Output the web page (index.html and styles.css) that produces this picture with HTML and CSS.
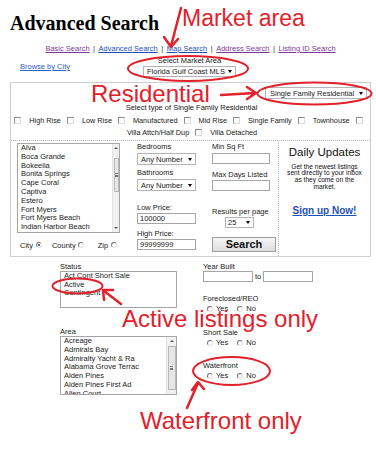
FILE: index.html
```html
<!DOCTYPE html>
<html>
<head>
<meta charset="utf-8">
<title>Advanced Search</title>
<link rel="stylesheet" href="styles.css">
</head>
<body>
<div class="page">
  <h1 class="title">Advanced Search</h1>
  <div class="nav">
    <a class="visited">Basic Search</a><span class="sep">|</span><a>Advanced Search</a><span class="sep">|</span><a>Map Search</a><span class="sep">|</span><a class="visited">Address Search</a><span class="sep">|</span><a class="visited">Listing ID Search</a>
  </div>
  <div class="market-row">
    <a class="browse">Browse by City</a>
    <div class="market">
      <div class="market-label">Select Market Area</div>
      <div class="select market-select"><span>Florida Gulf Coast MLS</span><i class="caret"></i></div>
    </div>
  </div>

  <div class="search-box">
    <div class="type-section">
      <div class="type-top">
        <div class="select type-select"><span>Single Family Residential</span><i class="caret"></i></div>
      </div>
      <div class="type-caption">Select type of Single Family Residential</div>
      <div class="check-row">
        <i class="cb"></i><span class="cl">High Rise</span>
        <i class="cb"></i><span class="cl">Low Rise</span>
        <i class="cb"></i><span class="cl">Manufactured</span>
        <i class="cb"></i><span class="cl">Mid Rise</span>
        <i class="cb"></i><span class="cl">Single Family</span>
        <i class="cb"></i><span class="cl">Townhouse</span>
        <i class="cb"></i>
      </div>
      <div class="check-row row2">
        <span class="cl">Villa Attch/Half Dup</span>
        <i class="cb"></i><span class="cl last">Villa Detached</span>
      </div>
    </div>

    <div class="main">
      <div class="col-city">
        <div class="listbox city-list">
          <div class="options">
            <div>Alva</div>
            <div>Boca Grande</div>
            <div>Bokeelia</div>
            <div>Bonita Springs</div>
            <div>Cape Coral</div>
            <div>Captiva</div>
            <div>Estero</div>
            <div>Fort Myers</div>
            <div>Fort Myers Beach</div>
            <div>Indian Harbor Beach</div>
          </div>
          <div class="scrollbar">
            <div class="sb-btn"><i class="up"></i></div>
            <div class="sb-track"><div class="sb-thumb city-thumb"><i class="grip"></i></div></div>
            <div class="sb-btn"><i class="down"></i></div>
          </div>
        </div>
        <div class="loc-row">
          <span>City</span><i class="radio on r1"></i>
          <span class="g-county">County</span><i class="radio r2"></i>
          <span class="g-zip">Zip</span><i class="radio r1"></i>
        </div>
      </div>

      <div class="col-rooms">
        <div class="lbl">Bedrooms</div>
        <div class="select room-select"><span>Any Number</span><i class="caret"></i></div>
        <div class="lbl l-bath">Bathrooms</div>
        <div class="select room-select s-bath"><span>Any Number</span><i class="caret"></i></div>
        <div class="lbl l-low">Low Price:</div>
        <div class="input price">100000</div>
        <div class="lbl l-high">High Price:</div>
        <div class="input price i-high">99999999</div>
      </div>

      <div class="col-size">
        <div class="lbl">Min Sq Ft</div>
        <div class="input size-input"></div>
        <div class="lbl l-days">Max Days Listed</div>
        <div class="input size-input i-days"></div>
        <div class="lbl l-results">Results per page</div>
        <div class="select results-select"><span>25</span><i class="caret"></i></div>
        <div class="search-btn">Search</div>
      </div>

      <div class="col-daily">
        <div class="daily-title">Daily Updates</div>
        <div class="daily-text">Get the newest listings<br>sent directly to your inbox<br>as they come on the<br>market.</div>
        <a class="signup">Sign up Now!</a>
      </div>
    </div>
  </div>

  <div class="lower">
    <div class="col-a">
      <div class="lbl">Status</div>
      <div class="listbox status-list">
        <div class="options">
          <div>Act Cont Short Sale</div>
          <div>Active</div>
          <div>Contingent</div>
        </div>
      </div>
      <div class="lbl l-area">Area</div>
      <div class="listbox area-list">
        <div class="options">
          <div>Acreage</div>
          <div>Admirals Bay</div>
          <div>Admiralty Yacht &amp; Ra</div>
          <div>Alabama Grove Terrac</div>
          <div>Alden Pines</div>
          <div>Alden Pines First Ad</div>
          <div>Allen Court</div>
        </div>
        <div class="scrollbar wide">
          <div class="sb-btn"><i class="up"></i></div>
          <div class="sb-track"><div class="sb-thumb area-thumb"><i class="grip"></i></div></div>
        </div>
      </div>
    </div>
    <div class="col-b">
      <div class="lbl">Year Built</div>
      <div class="year-row"><div class="input year"></div><span class="to">to</span><div class="input year"></div></div>
      <div class="lbl l-fore">Foreclosed/REO</div>
      <div class="yn"><i class="radio"></i><span class="yes">Yes</span><i class="radio r-no"></i><span class="no">No</span></div>
      <div class="lbl l-short">Short Sale</div>
      <div class="yn"><i class="radio"></i><span class="yes">Yes</span><i class="radio r-no"></i><span class="no">No</span></div>
      <div class="lbl l-water">Waterfront</div>
      <div class="yn"><i class="radio"></i><span class="yes">Yes</span><i class="radio r-no"></i><span class="no">No</span></div>
    </div>
  </div>

  <div class="notes">
    <svg class="marks" width="376" height="452" viewBox="0 0 376 452">
      <g fill="none" stroke="#e3212b" stroke-width="2" stroke-linecap="round" stroke-linejoin="round">
        <ellipse cx="188" cy="68.5" rx="60" ry="12.5"/>
        <ellipse cx="314.5" cy="93.5" rx="57" ry="11"/>
        <ellipse cx="77.5" cy="286" rx="25" ry="7.5"/>
        <ellipse cx="231.5" cy="371" rx="38.5" ry="14"/>
        <path stroke-width="2.5" d="M181 8 L171 46 M164 37 L171 47 L178 39"/>
        <path stroke-width="2.5" d="M221 95 L255 93 M247 87 L256 93 L247 99"/>
        <path stroke-width="2.5" d="M121 304 L104 291 M104 300 L103 290 L113 290"/>
        <path stroke-width="2.5" d="M187 408 L198 383 M192 390 L198 382 L204 389"/>
      </g>
    </svg>
    <div class="note note-market">Market area</div>
    <div class="note note-res">Residential</div>
    <div class="note note-active">Active listings only</div>
    <div class="note note-water">Waterfront only</div>
  </div>
</div>
</body>
</html>
```

FILE: styles.css
```css
* { box-sizing: border-box; }
html, body { margin: 0; padding: 0; background: #fff; }
body {
  font-family: "Liberation Sans", Arial, sans-serif;
  font-size: 7.5px;
  color: #1a1a1a;
}
.page { position: relative; width: 376px; height: 452px; overflow: hidden; }

.title {
  margin: 0;
  padding: 11px 0 0 10px;
  height: 35px;
  font-family: "Liberation Serif", "Times New Roman", serif;
  font-weight: bold;
  font-size: 20px;
  line-height: 24px;
  color: #000;
}

a { text-decoration: underline; color: #1f4fb8; cursor: pointer; }
a.visited { color: #7d3a95; }

.nav {
  margin-top: 9px;
  height: 10px;
  line-height: 10px;
  text-align: center;
  padding-left: 5px;
  white-space: nowrap;
}
.sep { padding: 0 3.5px; color: #333; }

.market-row {
  margin-top: 2px;
  height: 21px;
  display: grid;
  grid-template-columns: 143px 93px;
}
.browse { align-self: center; padding-left: 20px; color: #2a62c9; }
.market-label { height: 9px; line-height: 9px; text-align: center; }

.select {
  display: flex;
  align-items: center;
  justify-content: space-between;
  background: #fff;
  border: 1px solid #b4b4b4;
  padding-left: 3px;
  white-space: nowrap;
  overflow: hidden;
}
.caret {
  width: 0; height: 0;
  border-left: 2.5px solid transparent;
  border-right: 2.5px solid transparent;
  border-top: 3px solid #000;
  margin-right: 3px;
  flex: none;
}
.market-select { margin-top: 1px; height: 11px; }

.search-box {
  margin: 5px 0 0 10px;
  width: 361px;
  height: 175px;
  border: 1px solid #cfcfcf;
}
.type-section {
  height: 58px;
  border-bottom: 1px dotted #b8b8b8;
}
.type-top { display: flex; justify-content: flex-end; padding: 4px 3px 0 0; }
.type-select { width: 102px; height: 12px; padding-left: 4px; }
.type-caption { margin-top: 4px; height: 9px; line-height: 9px; text-align: center; padding-left: 2px; }

.check-row {
  margin-top: 3px;
  height: 10px;
  display: flex;
  align-items: center;
  justify-content: center;
  white-space: nowrap;
  font-size: 7.3px;
  padding-right: 4px;
}
.check-row.row2 { margin-top: 2px; padding-left: 3px; padding-right: 0; }
.cb {
  width: 7px; height: 7px;
  border: 1px solid;
  border-color: #8c8c8c #dcdcdc #dcdcdc #8c8c8c;
  background: #fff;
  flex: none;
}
.cl { margin: 0 6px 0 8px; }
.row2 .cl:first-child { margin-left: 0; }
.row2 .cl.last { margin-right: 0; }

.main { display: flex; height: 115px; }

.listbox {
  display: flex;
  border: 1px solid #a6a6a6;
  background: #fff;
  overflow: hidden;
}
.options { flex: 1; overflow: hidden; white-space: nowrap; }

.col-city { margin-left: 6px; width: 103px; padding-top: 2px; }
.city-list { height: 90px; }
.city-list .options { padding-left: 3px; line-height: 8.8px; }

.scrollbar {
  width: 7px;
  display: flex;
  flex-direction: column;
  background: #f1f1f1;
  border-left: 1px solid #e2e2e2;
  flex: none;
}
.scrollbar.wide { width: 10px; }
.sb-btn {
  height: 8px;
  display: flex;
  align-items: center;
  justify-content: center;
  flex: none;
}
.sb-track { flex: 1; position: relative; padding-top: 6px; }
.sb-thumb {
  margin: 0 0.5px;
  border: 1px solid #b9b9b9;
  background: #e6e6e6;
  display: flex;
  align-items: center;
  justify-content: center;
}
.city-thumb { height: 34px; }
.area-thumb { height: 44px; margin-top: -5px; }
.grip { width: 3px; height: 4px; border-top: 1px solid #777; border-bottom: 1px solid #777; position: relative; }
.grip::after { content: ""; position: absolute; left: 0; right: 0; top: 0.5px; border-top: 1px solid #777; }
.up, .down { width: 0; height: 0; border-left: 2px solid transparent; border-right: 2px solid transparent; }
.up { border-bottom: 2px solid #555; }
.down { border-top: 2px solid #555; }

.radio {
  width: 6px; height: 6px;
  border-radius: 50%;
  border: 1px solid;
  border-color: #7a7a7a #e2e2e2 #e2e2e2 #7a7a7a;
  background: #fff;
  flex: none;
  position: relative;
}
.radio.on::after {
  content: "";
  position: absolute;
  left: 1px; top: 1px;
  width: 2px; height: 2px;
  border-radius: 50%;
  background: #333;
}

.loc-row {
  margin-top: 7px;
  height: 10px;
  display: flex;
  align-items: center;
  padding-left: 3px;
}
.r1 { margin-left: 3px; }
.r2 { margin-left: 2px; }
.g-county { margin-left: 10px; }
.g-zip { margin-left: 14px; }

.lbl { height: 9px; line-height: 9px; white-space: nowrap; }
.input {
  height: 11px;
  line-height: 9px;
  border: 1px solid #a6a6a6;
  background: #fff;
  padding-left: 2px;
}

.col-rooms { margin-left: 17px; width: 59px; padding-top: 1px; }
.room-select { margin-top: 2px; height: 12px; }
.l-bath { margin-top: 3px; }
.s-bath { margin-top: 2px; }
.l-low { margin-top: 12px; }
.price { margin-top: 1px; }
.l-high { margin-top: 5px; }
.i-high { margin-top: 1px; }

.col-size { margin-left: 16px; width: 64px; padding-top: 1px; }
.size-input { margin-top: 2px; width: 58px; }
.l-days { margin-top: 6px; }
.i-days { margin-top: 1px; }
.l-results { margin-top: 16px; }
.results-select { margin: 1px 0 0 13px; width: 29px; height: 11px; padding-left: 2px; }
.search-btn {
  margin-top: 9px;
  height: 15px;
  border: 1px solid #9d9d9d;
  background: linear-gradient(#f6f6f6, #dedede);
  font-weight: bold;
  font-size: 11px;
  line-height: 13px;
  text-align: center;
  color: #111;
}

.col-daily {
  margin-left: 2px;
  flex: 1;
  border-left: 1px dotted #bdbdbd;
  text-align: center;
  padding-top: 4px;
}
.daily-title { font-size: 11.5px; line-height: 14px; color: #111; }
.daily-text { margin-top: 4.5px; font-size: 6.6px; line-height: 6.8px; white-space: nowrap; color: #111; }
.signup {
  display: block;
  margin-top: 14px;
  font-weight: bold;
  font-size: 10px;
  line-height: 11px;
  color: #1f4fb8;
}

.lower { display: flex; margin-top: 5px; padding-left: 60px; }
.col-a { width: 117px; }
.status-list { height: 37px; }
.status-list .options { padding-left: 3px; line-height: 8.5px; }
.l-area { margin-top: 19px; }
.area-list { height: 59px; }
.area-list .options { padding-left: 3px; line-height: 8.8px; }

.col-b { margin-left: 26px; }
.year-row { display: flex; align-items: center; height: 11px; }
.year { width: 50px; }
.to { margin: 0 2px; }
.l-fore { margin-top: 12px; }
.yn { margin-top: 1px; height: 9px; display: flex; align-items: center; padding-left: 4px; }
.yes { margin-left: 3px; }
.r-no { margin-left: 9px; }
.no { margin-left: 3px; }
.l-short { margin-top: 15px; }
.l-water { margin-top: 14px; }

.notes { position: absolute; left: 0; top: 0; width: 376px; height: 452px; pointer-events: none; }
.marks { position: absolute; left: 0; top: 0; }
.note {
  position: absolute;
  font-family: "Liberation Sans", Arial, sans-serif;
  color: #e3212b;
  font-size: 24px;
  line-height: 24px;
  white-space: nowrap;
}
.note-market { left: 182px; top: 7px; font-size: 23px; line-height: 23px; }
.note-res { left: 91px; top: 82px; }
.note-active { left: 122px; top: 307px; }
.note-water { left: 140px; top: 409px; }
```
